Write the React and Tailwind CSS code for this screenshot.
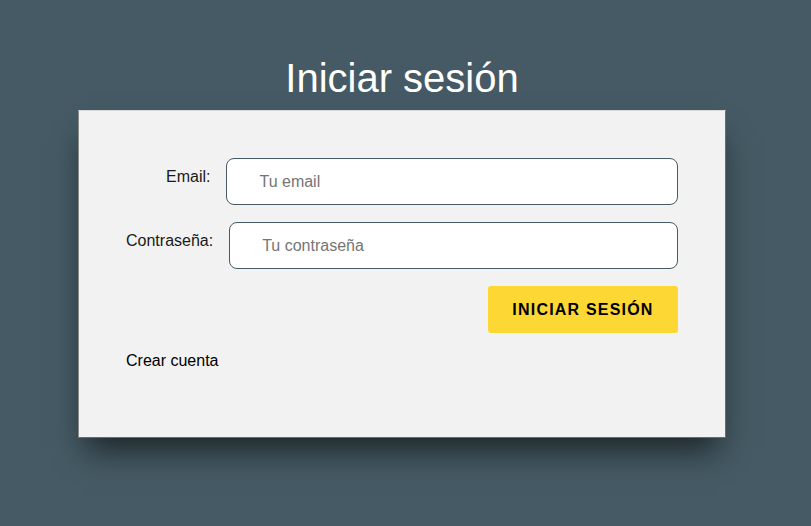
import React from 'react';

const font = { fontFamily: '"Liberation Sans", Arial, sans-serif' };

export default function App() {
  return (
    <div className="min-h-[526px] w-full bg-[#455a64] flex flex-col items-center pr-[7px]" style={font}>
      <h1 className="mt-[55px] mb-[9px] text-[40px] leading-[46px] text-white font-normal">
        Iniciar sesión
      </h1>
      <div className="w-[648px] h-[328px] bg-[#f2f2f2] border border-[#d8d8d8] border-b-[#6b6b6b] border-r-[#6b6b6b] border-l-[#8a8a8a] shadow-[0_20px_30px_-8px_rgba(0,0,0,0.6)] px-[47px] pt-[47px]">
        <form onSubmit={(e) => e.preventDefault()} className="flex flex-col">
          <div className="flex items-start">
            <label htmlFor="email" className="ml-10 mr-4 mt-[10px] text-base leading-[18px] text-[#1a1a1a]">
              Email:
            </label>
            <input
              id="email"
              type="email"
              placeholder="Tu email"
              className="flex-1 h-[47px] bg-white border border-[#455a64] rounded-lg pl-8 text-base text-black placeholder:text-[#757575] outline-none"
            />
          </div>
          <div className="flex items-start mt-[17px]">
            <label htmlFor="password" className="mr-4 mt-[10px] text-base leading-[18px] text-[#1a1a1a]">
              Contraseña:
            </label>
            <input
              id="password"
              type="password"
              placeholder="Tu contraseña"
              className="flex-1 h-[47px] bg-white border border-[#455a64] rounded-lg pl-8 text-base text-black placeholder:text-[#757575] outline-none"
            />
          </div>
          <div className="flex justify-end mt-[17px]">
            <button
              type="submit"
              className="w-[190px] h-[47px] bg-[#fdd835] rounded-[3px] text-base font-black tracking-[1.2px] text-black"
            >
              INICIAR SESIÓN
            </button>
          </div>
          <a href="#" className="mt-[19px] text-base leading-[18px] text-black self-start">
            Crear cuenta
          </a>
        </form>
      </div>
    </div>
  );
}
